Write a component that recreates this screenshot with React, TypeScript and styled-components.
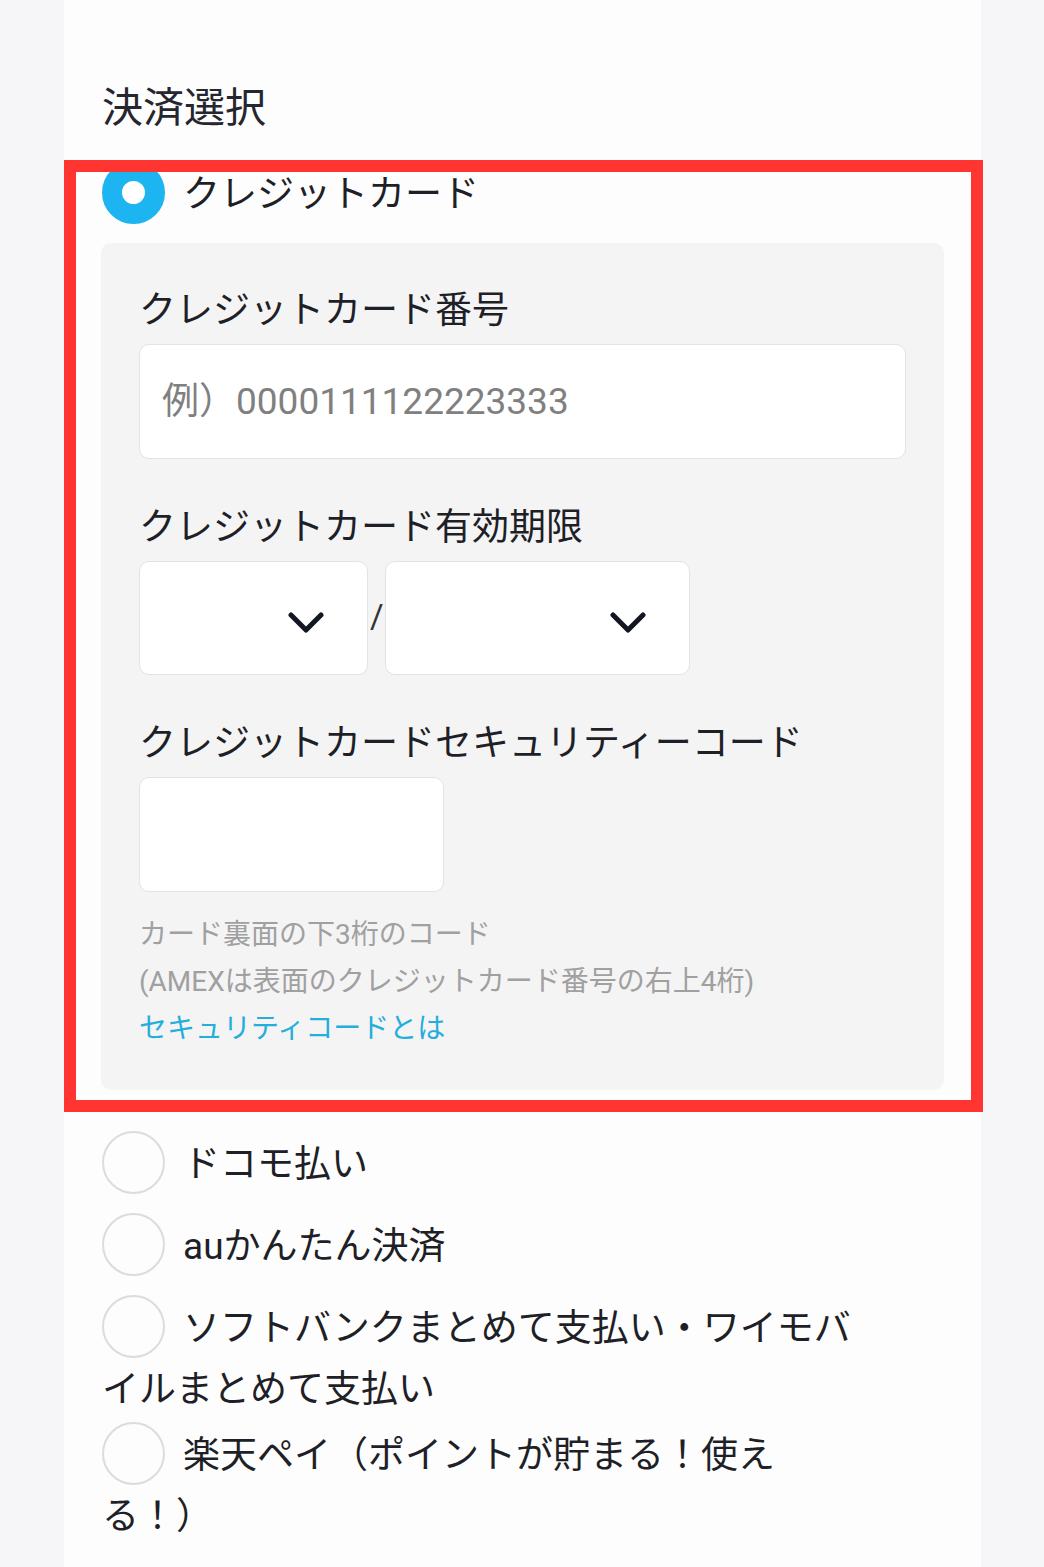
import React from "react";
import styled, { createGlobalStyle } from "styled-components";

const GlobalStyle = createGlobalStyle`
  html, body {
    margin: 0;
    padding: 0;
    background: #f6f6f8;
  }
  body {
    font-family: Roboto, "Noto Sans CJK JP", sans-serif;
    color: #1f1f27;
  }
  * { box-sizing: border-box; }
`;

const Page = styled.div`
  position: relative;
  width: 917px;
  min-height: 1567px;
  margin-left: 64px;
  background: #fdfdfd;
  padding: 84px 37px 40px 38px;
`;

const Title = styled.h2`
  margin: 0;
  font-size: 41px;
  line-height: 48px;
  font-weight: 400;
  color: #26262e;
`;

const OptionList = styled.div`
  margin-top: 29px;
`;

const Option = styled.div`
  width: 760px;
  font-size: 37px;
  line-height: 45px;
  margin-bottom: 10.5px;
  color: #1f1f27;
`;

const Radio = styled.span<{ $checked?: boolean }>`
  display: inline-block;
  width: 63px;
  height: 63px;
  border-radius: 50%;
  vertical-align: -26px;
  margin: 0 18px 8.5px 0;
  background: ${(p) => (p.$checked ? "#ffffff" : "#fdfdfd")};
  border: ${(p) => (p.$checked ? "20px solid #1cb5f1" : "2px solid #dcdcdc")};
`;

const Panel = styled.div`
  width: 843px;
  margin: 0 0 41px -1px;
  background: #f4f4f5;
  border-radius: 10px;
  padding: 46px 38px 38px 38px;
`;

const FieldLabel = styled.div<{ $first?: boolean }>`
  font-size: 37px;
  line-height: 44px;
  margin-top: ${(p) => (p.$first ? "0" : "47px")};
  margin-bottom: 11px;
  color: #1f1f27;
`;

const TextInput = styled.input<{ $width: number }>`
  display: block;
  width: ${(p) => p.$width}px;
  height: 115px;
  background: #ffffff;
  border: 1.5px solid #e3e3e3;
  border-radius: 10px;
  padding: 0 22px;
  font-family: Roboto, "Noto Sans CJK JP", sans-serif;
  font-size: 37px;
  color: #1f1f27;
  outline: none;
  &::placeholder {
    color: #808080;
  }
`;

const ExpiryRow = styled.div`
  display: flex;
  align-items: center;
`;

const SelectBox = styled.div<{ $width: number }>`
  width: ${(p) => p.$width}px;
  height: 114px;
  background: #ffffff;
  border: 1.5px solid #e3e3e3;
  border-radius: 10px;
  display: flex;
  align-items: center;
  justify-content: flex-end;
  padding: 10px 43px 0 0;
`;

const Slash = styled.span`
  font-size: 33px;
  line-height: 34px;
  color: #333;
  margin: -2px 1px 0 2px;
`;

const HelpBlock = styled.div`
  margin-top: 19px;
`;

const HelpLine = styled.div<{ $link?: boolean }>`
  font-size: 28px;
  line-height: 47px;
  color: ${(p) => (p.$link ? "#25addc" : "#a0a0a0")};
  cursor: ${(p) => (p.$link ? "pointer" : "default")};
`;

const Highlight = styled.div`
  position: absolute;
  left: 0;
  top: 160px;
  width: 919px;
  height: 952px;
  border: 12px solid #fe3530;
  pointer-events: none;
`;

const Chevron = () => (
  <svg width="36" height="22" viewBox="0 0 36 22" aria-hidden="true">
    <polyline
      points="3,3 18,18 33,3"
      fill="none"
      stroke="#131722"
      strokeWidth="5"
      strokeLinecap="round"
      strokeLinejoin="round"
    />
  </svg>
);

const others = [
  "ドコモ払い",
  "auかんたん決済",
  "ソフトバンクまとめて支払い・ワイモバイルまとめて支払い",
  "楽天ペイ（ポイントが貯まる！使える！）",
];

export default function App() {
  return (
    <>
      <GlobalStyle />
      <Page>
        <Title>決済選択</Title>
        <OptionList>
          <Option>
            <Radio $checked />
            クレジットカード
          </Option>
          <Panel>
            <FieldLabel $first>クレジットカード番号</FieldLabel>
            <TextInput $width={767} placeholder="例）0000111122223333" />
            <FieldLabel>クレジットカード有効期限</FieldLabel>
            <ExpiryRow>
              <SelectBox $width={229}>
                <Chevron />
              </SelectBox>
              <Slash>/</Slash>
              <SelectBox $width={305}>
                <Chevron />
              </SelectBox>
            </ExpiryRow>
            <FieldLabel>クレジットカードセキュリティーコード</FieldLabel>
            <TextInput $width={305} />
            <HelpBlock>
              <HelpLine>カード裏面の下3桁のコード</HelpLine>
              <HelpLine>(AMEXは表面のクレジットカード番号の右上4桁)</HelpLine>
              <HelpLine $link>セキュリティコードとは</HelpLine>
            </HelpBlock>
          </Panel>
          {others.map((label) => (
            <Option key={label}>
              <Radio />
              {label}
            </Option>
          ))}
        </OptionList>
        <Highlight />
      </Page>
    </>
  );
}
